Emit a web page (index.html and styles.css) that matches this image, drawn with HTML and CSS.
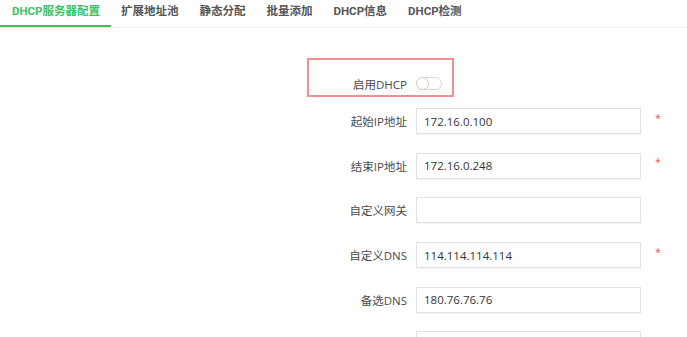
FILE: index.html
```html
<!DOCTYPE html>
<html lang="zh-CN">
<head>
<meta charset="utf-8">
<title>DHCP</title>
<link rel="stylesheet" href="styles.css">
</head>
<body>
<nav class="tabs">
  <a class="tab active">DHCP服务器配置</a>
  <a class="tab">扩展地址池</a>
  <a class="tab">静态分配</a>
  <a class="tab">批量添加</a>
  <a class="tab">DHCP信息</a>
  <a class="tab">DHCP检测</a>
</nav>
<form class="form">
  <div class="enable-box">
    <label class="label">启用DHCP</label>
    <span class="toggle"><span class="knob"></span></span>
  </div>
  <div class="row">
    <label class="label">起始IP地址</label>
    <input class="input" value="172.16.0.100">
    <span class="req">*</span>
  </div>
  <div class="row">
    <label class="label">结束IP地址</label>
    <input class="input" value="172.16.0.248">
    <span class="req">*</span>
  </div>
  <div class="row">
    <label class="label">自定义网关</label>
    <input class="input" value="">
  </div>
  <div class="row">
    <label class="label">自定义DNS</label>
    <input class="input" value="114.114.114.114">
    <span class="req">*</span>
  </div>
  <div class="row">
    <label class="label">备选DNS</label>
    <input class="input" value="180.76.76.76">
  </div>
  <div class="row">
    <label class="label"></label>
    <input class="input" value="">
  </div>
</form>
</body>
</html>
```
FILE: styles.css
```css
html, body {
  margin: 0;
  padding: 0;
  background: #fff;
  overflow: hidden;
}
body {
  font-family: "Open Sans", "Noto Sans CJK SC", sans-serif;
  font-size: 11.5px;
  color: #333;
}
.tabs {
  display: flex;
  height: 27px;
  border-bottom: 1px solid #eeeeee;
  box-sizing: content-box;
}
.tab {
  display: block;
  padding: 0 10.5px;
  height: 25px;
  line-height: 23px;
  font-family: "Roboto", "Noto Sans CJK SC", sans-serif;
  font-weight: 700;
  font-size: 11.5px;
  color: #555;
  border-bottom: 2px solid transparent;
}
.tab:first-child {
  padding-left: 12px;
}
.tab.active {
  color: #3fbf63;
  border-bottom-color: #3fbf63;
}
.form {
  display: flex;
  flex-direction: column;
  padding-left: 307px;
  padding-top: 30px;
}
.enable-box {
  display: flex;
  align-items: center;
  width: 147px;
  height: 39px;
  box-sizing: border-box;
  border: 2px solid #ef8f8f;
  padding-top: 12px;
  margin-bottom: 11px;
}
.label {
  width: 109px;
  text-align: right;
  padding-right: 9px;
  box-sizing: border-box;
  flex: none;
  color: #4a4a4a;
}
.enable-box .label {
  width: 107px;
}
.toggle {
  position: relative;
  display: inline-block;
  width: 26px;
  height: 13px;
  border: 1px solid #d6d6d6;
  border-radius: 8px;
  box-sizing: border-box;
  background: #fff;
  flex: none;
}
.knob {
  position: absolute;
  left: -1px;
  top: -1px;
  width: 13px;
  height: 13px;
  border-radius: 50%;
  border: 1px solid #cfcfcf;
  box-sizing: border-box;
  background: #fff;
}
.row {
  display: flex;
  align-items: center;
  height: 26px;
  margin-bottom: 18.7px;
}
.input {
  width: 225px;
  height: 26px;
  box-sizing: border-box;
  border: 1px solid #e2e2e2;
  box-shadow: 0 1px 1px rgba(0,0,0,0.04);
  padding: 0 7px;
  font-family: "Open Sans", "Noto Sans CJK SC", sans-serif;
  font-size: 11.5px;
  color: #333;
  outline: none;
  flex: none;
}
.req {
  margin-left: 14px;
  color: #e25c5c;
  font-size: 11px;
  position: relative;
  top: -4px;
}
```
